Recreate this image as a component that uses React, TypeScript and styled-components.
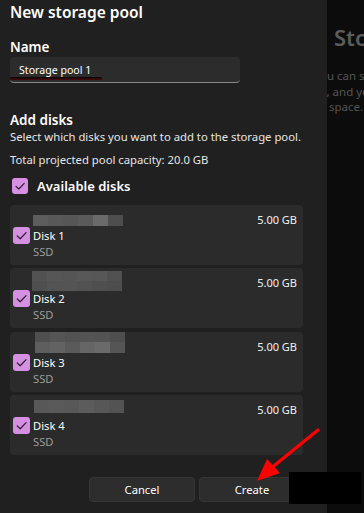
import React from "react";
import styled, { createGlobalStyle } from "styled-components";

const GlobalStyle = createGlobalStyle`
  html, body { margin: 0; padding: 0; background: #0c0c0c; }
  body { font-family: "Noto Sans", "Open Sans", sans-serif; color: #ffffff; }
  * { box-sizing: border-box; }
`;

const Page = styled.div`
  position: relative;
  width: 364px;
  height: 513px;
  display: flex;
  overflow: hidden;
`;

const Dialog = styled.div`
  width: 327px;
  flex: none;
  background: #202020;
  display: flex;
  flex-direction: column;
  padding: 1px 22px 0 10px;
`;

const Title = styled.h1`
  margin: 0;
  font-size: 15.5px;
  line-height: 22px;
  font-weight: 600;
  color: #ffffff;
`;

const FieldLabel = styled.div`
  margin-top: 15px;
  font-size: 13.5px;
  line-height: 18px;
  font-weight: 600;
`;

const InputBox = styled.div`
  position: relative;
  margin-top: 1px;
  width: 230px;
  height: 26px;
  background: #2c2c2c;
  border-radius: 4px;
  border-bottom: 1px solid #8a8a8a;
  display: flex;
  align-items: center;
  padding-left: 9px;
  font-size: 10.6px;
  color: #ffffff;
`;

const Squiggle = styled.span`
  position: absolute;
  left: 0;
  top: 20px;
  width: 92px;
  height: 3px;
  border-radius: 2px;
  background: linear-gradient(#050505, #4a0a0c);
`;

const SectionTitle = styled.div`
  margin-top: 28px;
  font-size: 13.5px;
  line-height: 18px;
  font-weight: 600;
`;

const BodyText = styled.div<{ $gap?: number }>`
  margin-top: ${(p) => p.$gap ?? 0}px;
  font-size: 11.3px;
  line-height: 16px;
  color: #e6e6e6;
`;

const SelectAllRow = styled.div`
  margin-top: 10px;
  height: 16px;
  display: flex;
  align-items: center;
  gap: 9px;
  padding-left: 2px;
  font-size: 13px;
  font-weight: 600;
`;

const Check = styled.span<{ $size: number }>`
  flex: none;
  width: ${(p) => p.$size}px;
  height: ${(p) => p.$size}px;
  border-radius: 3px;
  background: #d590e2;
  display: flex;
  align-items: center;
  justify-content: center;
`;

const DiskList = styled.div`
  margin-top: 11px;
  display: flex;
  flex-direction: column;
  gap: 3.3px;
`;

const Card = styled.div`
  height: 60px;
  width: 293px;
  background: #2b2b2b;
  border-radius: 4px;
  padding: 0 6px 0 3px;
  display: flex;
  flex-direction: column;
`;

const TopRow = styled.div`
  height: 22px;
  display: flex;
  justify-content: space-between;
`;

const Mosaic = styled.div<{ $top: number; $left: number }>`
  margin-top: ${(p) => p.$top}px;
  margin-left: ${(p) => p.$left}px;
  display: grid;
  grid-auto-flow: column;
  grid-auto-columns: 15px;
  align-self: flex-start;
`;

const Cell = styled.span<{ $h: number }>`
  display: block;
  height: ${(p) => p.$h}px;
`;

const Size = styled.div`
  margin-top: 7px;
  font-size: 11px;
  line-height: 16px;
  color: #f0f0f0;
`;

const NameRow = styled.div`
  height: 17px;
  display: flex;
  align-items: center;
  gap: 3px;
  font-size: 11.2px;
  color: #ffffff;
`;

const DiskType = styled.div`
  padding-left: 20px;
  font-size: 11.2px;
  line-height: 16px;
  color: #9c9c9c;
`;

const Footer = styled.div`
  margin-top: auto;
  margin-bottom: 11px;
  display: flex;
  justify-content: flex-end;
  gap: 4px;
`;

const Button = styled.button`
  width: 106px;
  height: 25px;
  border-radius: 4px;
  border: 1px solid #353535;
  background: #2d2d2d;
  color: #ffffff;
  font-family: inherit;
  font-size: 11.2px;
  padding: 0;
`;

const Backdrop = styled.div`
  flex: 1;
  overflow: hidden;
  padding: 24px 0 0 7px;
  white-space: nowrap;
`;

const BackHeading = styled.div`
  font-size: 22px;
  line-height: 26px;
  font-weight: 600;
  color: #5c5c5c;
`;

const BackPara = styled.div`
  margin-top: 18px;
  font-size: 11.5px;
  line-height: 15.5px;
  color: #545454;
`;

const BackLine = styled.div<{ $shift: number }>`
  margin-left: ${(p) => p.$shift}px;
`;

const Redaction = styled.div`
  position: absolute;
  left: 289px;
  top: 472px;
  width: 72px;
  height: 32px;
  background: #000000;
`;

const ArrowLayer = styled.svg`
  position: absolute;
  left: 0;
  top: 0;
  pointer-events: none;
`;

const CheckMark: React.FC<{ size: number }> = ({ size }) => (
  <Check $size={size}>
    <svg width={size - 4} height={size - 4} viewBox="0 0 12 12">
      <path d="M2 6.3 L4.8 9 L10.2 3.3" fill="none" stroke="#2a1a2e" strokeWidth="1.1" strokeLinecap="round" strokeLinejoin="round" />
    </svg>
  </Check>
);

type Disk = {
  name: string;
  top: number;
  left: number;
  rows: string[][];
  cellH: number;
};

const disks: Disk[] = [
  { name: "Disk 1", top: 10, left: 20, cellH: 11, rows: [["#5d5d5d", "#585858", "#565656", "#5a5a5a", "#6a6a6a", "#4e4e4e"]] },
  {
    name: "Disk 2",
    top: 3,
    left: 19,
    cellH: 10,
    rows: [
      ["#525252", "#565656", "#555555", "#585858", "#575757", "#515151"],
      ["#4f4f4f", "#535353", "#545454", "#525252", "#4f4f4f", "#4d4d4d"],
    ],
  },
  {
    name: "Disk 3",
    top: 0,
    left: 22,
    cellH: 10.5,
    rows: [
      ["#4f4f4f", "#555555", "#525252", "#545454", "#535353", "#4e4e4e"],
      ["#5e5e5e", "#626262", "#5a5a5a", "#666666", "#6a6a6a", "#555555"],
    ],
  },
  { name: "Disk 4", top: 5, left: 21, cellH: 13, rows: [["#585858", "#5a5a5a", "#585858", "#5c5c5c", "#575757", "#535353"]] },
];

const DiskCard: React.FC<{ disk: Disk }> = ({ disk }) => (
  <Card>
    <TopRow>
      <Mosaic $top={disk.top} $left={disk.left}>
        {disk.rows[0].map((_, ci) => (
          <div key={ci}>
            {disk.rows.map((row, ri) => (
              <Cell key={ri} $h={disk.cellH} style={{ background: row[ci] }} />
            ))}
          </div>
        ))}
      </Mosaic>
      <Size>5.00 GB</Size>
    </TopRow>
    <NameRow>
      <CheckMark size={17} />
      <span>{disk.name}</span>
    </NameRow>
    <DiskType>SSD</DiskType>
  </Card>
);

export default function App() {
  return (
    <>
      <GlobalStyle />
      <Page>
        <Dialog>
          <Title>New storage pool</Title>
          <FieldLabel>Name</FieldLabel>
          <InputBox>
            Storage pool 1
            <Squiggle />
          </InputBox>
          <SectionTitle>Add disks</SectionTitle>
          <BodyText>Select which disks you want to add to the storage pool.</BodyText>
          <BodyText $gap={7}>Total projected pool capacity: 20.0 GB</BodyText>
          <SelectAllRow>
            <CheckMark size={16} />
            <span>Available disks</span>
          </SelectAllRow>
          <DiskList>
            {disks.map((d) => (
              <DiskCard key={d.name} disk={d} />
            ))}
          </DiskList>
          <Footer>
            <Button>Cancel</Button>
            <Button>Create</Button>
          </Footer>
        </Dialog>
        <Backdrop>
          <BackHeading>Storage Spaces</BackHeading>
          <BackPara>
            <BackLine $shift={-20}>You can s</BackLine>
            <BackLine $shift={-13}>s, and yo</BackLine>
            <BackLine $shift={-5}>space.</BackLine>
          </BackPara>
        </Backdrop>
        <Redaction />
        <ArrowLayer width="364" height="513" viewBox="0 0 364 513">
          <line x1="318" y1="430" x2="270" y2="469" stroke="#ff0000" strokeWidth="3.2" strokeLinecap="round" />
          <polygon points="257,481 267,459 280,473" fill="#ff0000" />
        </ArrowLayer>
      </Page>
    </>
  );
}
